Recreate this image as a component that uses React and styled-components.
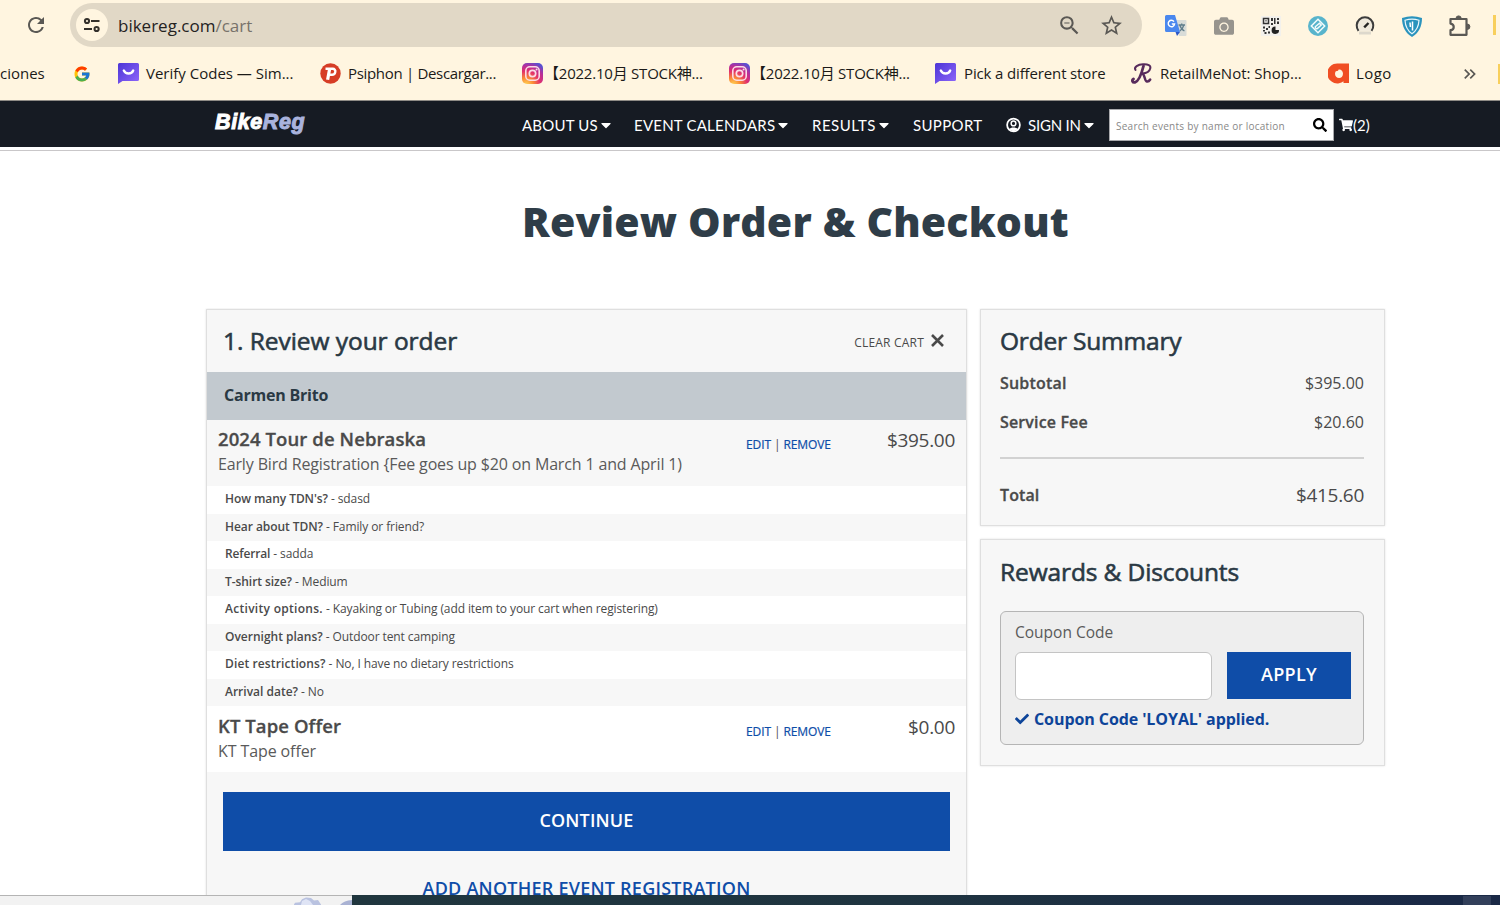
import React from 'react';
import styled, { createGlobalStyle } from 'styled-components';
import { FcGoogle } from 'react-icons/fc';
import { FaCaretDown, FaCheck, FaSearch, FaShoppingCart, FaCamera } from 'react-icons/fa';
import { MdRefresh, MdStarOutline, MdOutlineZoomOut, MdKeyboardDoubleArrowRight } from 'react-icons/md';

const GlobalStyle = createGlobalStyle`
  * { box-sizing: border-box; }
  body {
    margin: 0;
    width: 1500px;
    height: 905px;
    overflow: hidden;
    background: #fff;
    color: #4a4a4a;
    font-family: 'Open Sans', 'Noto Sans CJK JP', sans-serif;
  }
  svg { display: block; flex: none; }
`;

const Page = styled.div`
  display: flex;
  flex-direction: column;
  width: 1500px;
  height: 905px;
  overflow: hidden;
`;

const Text = styled.span`
  white-space: pre;
  letter-spacing: ${(p) => p.$ls || 0}px;
  ${(p) => p.$bold && `font-weight: ${p.$bold};`}
`;

// ---------- browser ----------

const Browser = styled.header`
  flex: none;
  height: 101px;
  background: #fff5e0;
  border-bottom: 1px solid #8f8c86;
`;

const Toolbar = styled.div`
  display: flex;
  align-items: center;
  height: 50px;
  padding-left: 24px;
  color: #5a5854;
`;

const Omnibox = styled.div`
  display: flex;
  align-items: center;
  width: 1072px;
  height: 44px;
  margin-left: 22px;
  padding-left: 6px;
  border-radius: 22px;
  background: #e1d8c6;
`;

const SiteInfo = styled.div`
  display: flex;
  align-items: center;
  justify-content: center;
  width: 32px;
  height: 32px;
  margin-right: 10px;
  border-radius: 50%;
  background: #fff5e0;
`;

const Url = styled.div`
  flex: 1;
  padding-top: 2px;
  font-size: 17px;
  line-height: 24px;
  color: #24221f;
  i { font-style: normal; color: #77726a; }
`;

const BoxIcons = styled.div`
  display: flex;
  align-items: center;
  gap: 17px;
  margin-right: 18px;
`;

const Extensions = styled.div`
  display: flex;
  align-items: center;
  gap: 27px;
  margin-left: 23px;
  padding-top: 2px;
`;

const Bookmarks = styled.div`
  display: grid;
  grid-template-columns: 73px 45px 202px 202px 207px 206px 196px 197px 132px 38px auto;
  align-items: center;
  height: 47px;
  font-size: 15px;
  line-height: 20px;
  color: #1b1a18;
  span { margin-top: -2px; }
`;

const Bookmark = styled.div`
  display: flex;
  align-items: center;
  gap: ${(p) => p.$gap || 7}px;
`;

const EdgeMark = styled.i`
  width: 3px;
  height: 20px;
  margin-left: ${(p) => p.$left}px;
  background: #f8cf5c;
`;

// ---------- site nav ----------

const SiteNav = styled.nav`
  flex: none;
  display: flex;
  align-items: center;
  height: 46px;
  padding-left: 215px;
  background: #161b23;
  color: #fff;
`;

const NavRule = styled.div`
  flex: none;
  height: 4px;
  border-bottom: 1px solid #c9c7c9;
  background: #fff;
`;

const Brand = styled.div`
  width: 307px;
  margin-top: -4px;
  font: italic bold 21.5px/24px 'Liberation Sans', sans-serif;
  -webkit-text-stroke: 1px currentColor;
  b { color: #a9b3dd; }
`;

const NavItem = styled.div`
  display: flex;
  align-items: center;
  width: ${(p) => p.$w}px;
  margin-top: 1px;
  font-family: Lato, sans-serif;
  font-size: 15px;
  line-height: 20px;
  svg:first-child { margin-right: 7px; }
`;

const SearchBox = styled.div`
  display: flex;
  align-items: center;
  justify-content: space-between;
  width: 225px;
  height: 32px;
  margin-top: 1px;
  padding: 0 6px 0 6px;
  background: #fff;
  border: 1px solid #a9aaad;
  color: #888;
  font-size: 10px;
  line-height: 14px;
  span { margin-top: 2px; }
`;

const Cart = styled.div`
  display: flex;
  align-items: center;
  margin: 2px 0 0 5px;
  font-family: Lato, sans-serif;
  font-size: 15px;
`;

// ---------- page ----------

const Title = styled.h1`
  flex: none;
  margin: 0;
  padding: 42px 0 0 522px;
  height: 157px;
  font-size: 41px;
  font-weight: 800;
  line-height: 56px;
  color: #2f3d48;
`;

const Columns = styled.main`
  flex: 1;
  min-height: 0;
  overflow: hidden;
  display: flex;
  align-items: flex-start;
  gap: 13px;
  padding: 1px 0 0 206px;
`;

const Card = styled.section`
  width: ${(p) => p.$w}px;
  height: ${(p) => p.$h}px;
  padding: ${(p) => p.$pad || 0};
  border: 1px solid #dfdfdf;
  box-shadow: 0 0 2px rgba(0, 0, 0, 0.12);
  background: #f7f7f7;
`;

const Side = styled.aside`
  display: flex;
  flex-direction: column;
  gap: 13px;
`;

const Heading = styled.h2`
  margin: 0;
  font-size: 24.5px;
  font-weight: 400;
  line-height: 34px;
  color: #2a3944;
  -webkit-text-stroke: 0.6px currentColor;
`;

const CardHead = styled.div`
  display: flex;
  align-items: center;
  justify-content: space-between;
  height: 62px;
  padding: 0 22px 0 16px;
`;

const ClearCart = styled.div`
  display: flex;
  align-items: center;
  gap: 7px;
  padding-top: 2px;
  font-size: 12px;
  svg { margin-top: -3px; }
`;

const Owner = styled.div`
  height: 48px;
  padding-left: 17px;
  background: #c2c9cf;
  color: #2a3944;
  font-size: 16px;
  line-height: 46px;
`;

const Item = styled.div`
  display: grid;
  grid-template-columns: 528px 1fr auto;
  height: ${(p) => p.$h}px;
  padding: ${(p) => p.$top || 6}px 11px 0 11px;
  background: ${(p) => p.$bg};
`;

const ItemName = styled.div`
  font-size: 18.5px;
  font-weight: 600;
  line-height: 26px;
  -webkit-text-stroke: 0.3px currentColor;
`;

const ItemSub = styled.div`
  font-size: 16px;
  line-height: 24px;
  color: #5a5a5a;
`;

const Actions = styled.div`
  padding-top: 10px;
  font-size: 12px;
  line-height: 17px;
  a { color: #0d4da8; -webkit-text-stroke: 0.2px currentColor; }
`;

const Price = styled.div`
  font-size: 19px;
  line-height: 28px;
`;

const Detail = styled.div`
  height: 27.5px;
  padding-left: 18px;
  background: ${(p) => (p.$odd ? '#f7f7f7' : '#fff')};
  font-size: 12px;
  line-height: 26.5px;
`;

const Foot = styled.div`
  padding: 20px 16px 0 16px;
  text-align: center;
`;

const Button = styled.button`
  display: block;
  width: ${(p) => p.$w};
  height: ${(p) => p.$h}px;
  padding: 0 0 3px;
  border: 0;
  background: #0f4da8;
  color: #fff;
  font: 600 18px 'Open Sans', sans-serif;
`;

const AddLink = styled.div`
  margin-top: 25px;
  color: #0f4da8;
  font-size: 18px;
  font-weight: 600;
  line-height: 25px;
`;

const SumRow = styled.div`
  display: flex;
  align-items: center;
  justify-content: space-between;
  height: ${(p) => p.$h || 39}px;
  font-size: 16px;
  span:first-child { -webkit-text-stroke: 0.3px currentColor; }
  span span:first-child { -webkit-text-stroke: 0; }
`;

const Rule = styled.div`
  height: 2px;
  margin: 21px 0 16px;
  background: #d2d2d2;
`;

const CouponBox = styled.div`
  height: 134px;
  margin-top: 22px;
  padding: 8px 12px 0 14px;
  border: 1px solid #b5b5b5;
  border-radius: 6px;
  background: #eee;
  font-size: 15.5px;
  line-height: 24px;
  color: #5a5a5a;
`;

const CouponRow = styled.div`
  display: flex;
  justify-content: space-between;
  margin-top: 8px;
`;

const CouponInput = styled.input`
  width: 197px;
  height: 48px;
  border: 1px solid #c4c4c4;
  border-radius: 6px;
  background: #fff;
`;

const Applied = styled.div`
  display: flex;
  align-items: center;
  gap: 5px;
  margin-top: 7px;
  color: #0d4499;
  font-size: 16px;
  font-weight: 700;
`;

const Taskbar = styled.footer`
  flex: none;
  display: flex;
  height: 10px;
  background: linear-gradient(90deg, #20363e 23%, #1f3440 60%, #1a2946 95%);
`;

const TaskSearch = styled.div`
  display: flex;
  justify-content: flex-end;
  width: 352px;
  border-top: 1px solid #b4b4b4;
  background: #f2f2f2;
`;

const TaskCorner = styled.div`
  width: 28px;
  margin-left: 1111px;
  margin-top: 1px;
  background: #323f5a;
`;

// ---------- icons ----------

const Tune = () => (
  <svg width="18" height="16" viewBox="0 0 18 16" fill="none" stroke="#33302b" strokeWidth="2">
    <circle cx="4" cy="4" r="2.1" />
    <path d="M8 4h8.5M1 12h8" />
    <circle cx="13.6" cy="12" r="2.1" />
  </svg>
);

const Store = () => (
  <svg width="21" height="21" viewBox="0 0 21 21">
    <defs>
      <linearGradient id="store" x1="0" y1="0" x2="1" y2="1">
        <stop offset="0" stopColor="#4c35d6" />
        <stop offset="1" stopColor="#9068fb" />
      </linearGradient>
    </defs>
    <path d="M1.5 0h18A1.5 1.5 0 0 1 21 1.5v15a1.5 1.5 0 0 1-1.5 1.5H4.5L0 21V1.5A1.5 1.5 0 0 1 1.5 0z" fill="url(#store)" />
    <path d="M5.8 7.5c1.8 4 7.8 4 9.4 0" fill="none" stroke="#fff" strokeWidth="2.4" strokeLinecap="round" />
  </svg>
);

const Psiphon = () => (
  <svg width="21" height="21" viewBox="0 0 21 21">
    <circle cx="10.5" cy="10.5" r="10.2" fill="#d63d26" />
    <path d="M5.5 5.8h7.2a2.5 2.5 0 0 1 2.6 3.1c-.3 1.9-1.5 2.9-3.3 2.9H10" fill="none" stroke="#fff" strokeWidth="2.4" />
    <path d="M9.6 6L7.6 16.8" fill="none" stroke="#fff" strokeWidth="3.2" />
  </svg>
);

const Insta = () => (
  <svg width="21" height="21" viewBox="0 0 21 21">
    <defs>
      <radialGradient id="insta" cx="0.2" cy="1.05" r="1.15">
        <stop offset="0" stopColor="#ffd95a" />
        <stop offset="0.3" stopColor="#fb8a35" />
        <stop offset="0.58" stopColor="#e2306c" />
        <stop offset="0.8" stopColor="#b52f9c" />
        <stop offset="1" stopColor="#5a50d0" />
      </radialGradient>
    </defs>
    <rect width="21" height="21" rx="5" fill="url(#insta)" />
    <rect x="3.8" y="3.8" width="13.4" height="13.4" rx="4" fill="none" stroke="#fbdde6" strokeWidth="1.6" />
    <circle cx="10.5" cy="10.5" r="3.2" fill="none" stroke="#fbdde6" strokeWidth="1.7" />
    <circle cx="14.6" cy="6.4" r="1" fill="#fbdde6" />
  </svg>
);

const Retail = () => (
  <svg width="22" height="21" viewBox="0 0 22 21" fill="none" stroke="#582b5c" strokeLinecap="round">
    <path d="M4.5 7C2.5 4 7 1.5 12 1.3c5-.3 8 1 7.3 4-.7 3.2-4.3 5-8 5.2" strokeWidth="2" />
    <path d="M12.5 3C11 9 8.5 18 4 19.3c-2.5.5-3.5-2-1.5-3.3" strokeWidth="2.8" />
    <path d="M11.3 10.5c3 1.5 2 7.5 4.5 8 1.6.3 2.8-1 3.4-2" strokeWidth="2.5" />
  </svg>
);

const Orange = () => (
  <svg width="21" height="21" viewBox="0 0 21 21">
    <path d="M10.5.5H21V20h-5.500v-1.800A10 10 0 1 1 10.500.5z" fill="#f04e23" />
    <path d="M10.600 6.500c2.200-.6 4.400 1.400 4.400 4.200s-1.800 4.300-3.800 4.300c-2.500 0-4.200-1.800-4.200-4.200 0-1 .4-2 1-2.700 1.500.2 2.300-.4 2.600-1.600z" fill="#fff5e0" />
  </svg>
);

const Translate = () => (
  <svg width="22" height="22" viewBox="0 0 22 22">
    <path d="M10 5h10.500A1 1 0 0 1 21.500 6v14a1 1 0 0 1-1 1H14z" fill="#d9dcd8" />
    <path d="M13.500 10h6.500M16.700 8.500V10M14.800 10c.8 3 2.300 4.800 4.600 6M18.800 10c-.6 2.700-2 4.800-4 6" stroke="#607d8b" strokeWidth="1.300" fill="none" />
    <path d="M1.500 0H10l5 17H1.500A1.500 1.500 0 0 1 0 15.500v-14A1.500 1.500 0 0 1 1.500 0z" fill="#4a87ee" />
    <path d="M10.500 17H15l-3 4z" fill="#2a56c6" />
    <path d="M9 6.600A3.200 3.200 0 1 0 9.600 9H6.800" fill="none" stroke="#fff" strokeWidth="1.400" />
  </svg>
);

const QrCode = () => (
  <svg width="20" height="20" viewBox="0 0 20 20">
    <rect width="20" height="20" fill="#f3f1ec" />
    <path d="M2.500 2.500h5v5h-5zM4.500 4.800h1" fill="none" stroke="#333" strokeWidth="1.500" />
    <path d="M10 2h2v3h-2zM13 2h1.500v6H13zM16 2h2v2h-2zM16 5.500h2V8h-2zM2 10.500h2v2H2zM5 12h2v2H5zM7.500 10h1.500v2H7.500zM2 14h2v1.500H2zM3.500 16h2v2h-2zM7 15.500h2v2H7zM10 7h2v2h-2z" fill="#333" />
    <path d="M14.500 10.500v3.500H18a3.700 3.700 0 1 1-3.500-3.500z" fill="#222" />
  </svg>
);

const Diamond = () => (
  <svg width="20" height="20" viewBox="0 0 20 20">
    <circle cx="10" cy="10" r="10" fill="#58b4cc" />
    <path d="M10 3.300L16.700 10 10 16.700 3.300 10z" fill="none" stroke="#f2fbfc" strokeWidth="1.500" />
    <path d="M7.300 10.700l4.200-3.500 1.800 1.800-4 3.600c-1.200.6-2.300-.6-2-1.900z" fill="none" stroke="#f2fbfc" strokeWidth="1.400" />
  </svg>
);

const Gauge = () => (
  <svg width="20" height="20" viewBox="0 0 20 20" fill="none">
    <path d="M3.500 14.800a8.300 8.300 0 1 1 13 0" fill="#efe9dc" stroke="#3c3c3c" strokeWidth="2" />
    <path d="M9.200 11.300l4.300-4.300" stroke="#222" strokeWidth="2.400" />
    <path d="M4 17h12" stroke="#ddd8cc" strokeWidth="3" />
  </svg>
);

const Shield = () => (
  <svg width="20" height="21" viewBox="0 0 20 21">
    <path d="M0 2Q10-1.500 20 2c0 8-3 15-10 19C3 17 0 10 0 2z" fill="#2a93bd" />
    <path d="M3 4.200q7-2.200 14 0c-.3 5.800-2.600 10.500-7 13.500C5.600 14.700 3.300 10 3 4.200z" fill="none" stroke="#e8f6fb" strokeWidth="1.200" />
    <path d="M10.500 5.500v9M8 6.500l.4 4.500" stroke="#fff" strokeWidth="1.500" />
  </svg>
);

const Puzzle = () => (
  <svg width="24" height="22" viewBox="0 0 24 22">
    <path d="M1.500 4h16v15.800h-16v-4.600c4.300-.6 4.300-6 0-6.600z" fill="none" stroke="#5a5854" strokeWidth="2.200" strokeLinejoin="round" />
    <path d="M7 3.500a2.500 2.500 0 0 1 5.200 0zM18.200 9a2.600 2.600 0 0 1 0 5.400z" fill="#5a5854" stroke="#5a5854" />
  </svg>
);

const User = () => (
  <svg width="15" height="16" viewBox="0 0 16 16" fill="none" stroke="#fff">
    <circle cx="8" cy="8" r="6.800" strokeWidth="1.900" />
    <circle cx="8" cy="6.300" r="2.500" strokeWidth="1.600" />
    <path d="M3 12.500c2.500-2.400 7.500-2.400 10 0L8 15z" fill="#fff" stroke="none" />
  </svg>
);

const Cross = () => (
  <svg width="13" height="13" viewBox="0 0 13 13" stroke="#4a4a4a" strokeWidth="2.600">
    <path d="M1 1l11 11M12 1L1 12" />
  </svg>
);

const Flower = () => (
  <svg width="62" height="9" viewBox="0 0 62 9">
    <path d="M4 8.500l1-1.800 5-.5 2-3 4-1.700 5 .5 3 2.500 4-.5 3 4.500V9H4z" fill="#b9c2e0" />
    <path d="M12 5l4-2 4 2 3 4H11z" fill="#dfe4f5" />
    <path d="M50 9q4-4.500 12-5v5z" fill="#a9b2d3" />
  </svg>
);

// ---------- data ----------

const bookmarks = [
  { icon: <Store />, label: 'Verify Codes — Sim...' },
  { icon: <Psiphon />, label: 'Psiphon | Descargar...', ls: -0.32 },
  { icon: <Insta />, label: '【2022.10月 STOCK神...', ls: -0.22, gap: 1 },
  { icon: <Insta />, label: '【2022.10月 STOCK神...', ls: -0.22, gap: 1 },
  { icon: <Store />, label: 'Pick a different store', ls: -0.14, gap: 8 },
  { icon: <Retail />, label: 'RetailMeNot: Shop...' },
  { icon: <Orange />, label: 'Logo', ls: 0.4 },
];

const nav = [
  { label: 'ABOUT US', w: 112, ls: 0.2, caret: true },
  { label: 'EVENT CALENDARS', w: 178, ls: 0.22, caret: true },
  { label: 'RESULTS', w: 101, ls: 0.5, caret: true },
  { label: 'SUPPORT', w: 93, ls: 0.35 },
  { label: 'SIGN IN', w: 103, ls: -0.2, caret: true, user: true },
];

const details = [
  { q: 'How many TDN\'s?', a: 'sdasd', qls: -0.07 },
  { q: 'Hear about TDN?', a: 'Family or friend?', qls: -0.06 },
  { q: 'Referral', a: 'sadda', qls: -0.15 },
  { q: 'T-shirt size?', a: 'Medium', qls: -0.06 },
  { q: 'Activity options.', a: 'Kayaking or Tubing (add item to your cart when registering)', qls: 0.29 },
  { q: 'Overnight plans?', a: 'Outdoor tent camping', qls: 0 },
  { q: 'Diet restrictions?', a: 'No, I have no dietary restrictions', qls: 0.12 },
  { q: 'Arrival date?', a: 'No', qls: 0 },
];

const App = () => {
  return (
    <Page>
      <GlobalStyle />
      <Browser>
        <Toolbar>
          <MdRefresh size={24} />
          <Omnibox>
            <SiteInfo><Tune /></SiteInfo>
            <Url><Text>bikereg.com<i>/cart</i></Text></Url>
            <BoxIcons>
              <MdOutlineZoomOut size={25} />
              <MdStarOutline size={25} />
            </BoxIcons>
          </Omnibox>
          <Extensions>
            <Translate />
            <FaCamera size={20} color="#97948e" />
            <QrCode />
            <Diamond />
            <Gauge />
            <Shield />
            <Puzzle />
          </Extensions>
          <EdgeMark $left={20} />
        </Toolbar>
        <Bookmarks>
          <Text>ciones</Text>
          <FcGoogle size={18} />
          {bookmarks.map((b, i) => (
            <Bookmark key={i} $gap={b.gap}>
              {b.icon}
              <Text $ls={b.ls}>{b.label}</Text>
            </Bookmark>
          ))}
          <Bookmark><MdKeyboardDoubleArrowRight size={20} color="#5a5854" /></Bookmark>
          <EdgeMark $left={0} />
        </Bookmarks>
      </Browser>
      <SiteNav>
        <Brand><Text $ls={0.6}>Bike<b>Reg</b></Text></Brand>
        {nav.map((n) => (
          <NavItem key={n.label} $w={n.w}>
            {n.user && <User />}
            <Text $ls={n.ls}>{n.label}</Text>
            {n.caret && <FaCaretDown size={16} />}
          </NavItem>
        ))}
        <SearchBox>
          <Text $ls={0.26}>Search events by name or location</Text>
          <FaSearch size={14} color="#000" />
        </SearchBox>
        <Cart>
          <FaShoppingCart size={14} />
          <Text>(2)</Text>
        </Cart>
      </SiteNav>
      <NavRule />
      <Title><Text $ls={0.18}>Review Order &amp; Checkout</Text></Title>
      <Columns>
        <Card $w={761} $h={640}>
          <CardHead>
            <Heading><Text $ls={-0.05}>1. Review your order</Text></Heading>
            <ClearCart><Text $ls={0.2}>CLEAR CART</Text><Cross /></ClearCart>
          </CardHead>
          <Owner><Text $bold={700} $ls={-0.22}>Carmen Brito</Text></Owner>
          <Item $h={66} $bg="#f7f7f7">
            <div>
              <ItemName><Text $ls={0.09}>2024 Tour de Nebraska</Text></ItemName>
              <ItemSub><Text $ls={-0.15}>{'Early Bird Registration {Fee goes up $20 on March 1 and April 1)'}</Text></ItemSub>
            </div>
            <Actions><Text $ls={-0.1}><a>EDIT</a> | <a>REMOVE</a></Text></Actions>
            <Price><Text $ls={-0.3}>$395.00</Text></Price>
          </Item>
          {details.map((d, i) => (
            <Detail key={d.q} $odd={i % 2 === 1}>
              <Text $bold={600} $ls={d.qls}>{d.q}</Text>
              <Text $ls={-0.1}>{' - ' + d.a}</Text>
            </Detail>
          ))}
          <Item $h={66} $top={7} $bg="#fff">
            <div>
              <ItemName><Text $ls={0.09}>KT Tape Offer</Text></ItemName>
              <ItemSub><Text $ls={-0.1}>KT Tape offer</Text></ItemSub>
            </div>
            <Actions><Text $ls={-0.1}><a>EDIT</a> | <a>REMOVE</a></Text></Actions>
            <Price><Text $ls={-0.29}>$0.00</Text></Price>
          </Item>
          <Foot>
            <Button $w="100%" $h={59}><Text $ls={0.14}>CONTINUE</Text></Button>
            <AddLink><Text $ls={0.24}>ADD ANOTHER EVENT REGISTRATION</Text></AddLink>
          </Foot>
        </Card>
        <Side>
          <Card $w={405} $h={217} $pad="14px 20px 0 19px">
            <Heading><Text $ls={-0.2}>Order Summary</Text></Heading>
            <SumRow $h={49}><Text $bold={600} $ls={0.2}>Subtotal</Text><Text>$395.00</Text></SumRow>
            <SumRow $h={29}><Text $bold={600} $ls={0.15}>Service Fee</Text><Text>$20.60</Text></SumRow>
            <Rule />
            <SumRow><Text $bold={600} $ls={0.1}>Total</Text><Price as="span"><Text $ls={-0.3}>$415.60</Text></Price></SumRow>
          </Card>
          <Card $w={405} $h={227} $pad="15px 20px 0 19px">
            <Heading><Text $ls={-0.12}>Rewards &amp; Discounts</Text></Heading>
            <CouponBox>
              <Text>Coupon Code</Text>
              <CouponRow>
                <CouponInput />
                <Button $w="124px" $h={47}><Text $ls={0.3}>APPLY</Text></Button>
              </CouponRow>
              <Applied><FaCheck size={14} /><Text $ls={-0.08}>Coupon Code 'LOYAL' applied.</Text></Applied>
            </CouponBox>
          </Card>
        </Side>
      </Columns>
      <Taskbar>
        <TaskSearch><Flower /></TaskSearch>
        <TaskCorner />
      </Taskbar>
    </Page>
  );
};

export default App;
